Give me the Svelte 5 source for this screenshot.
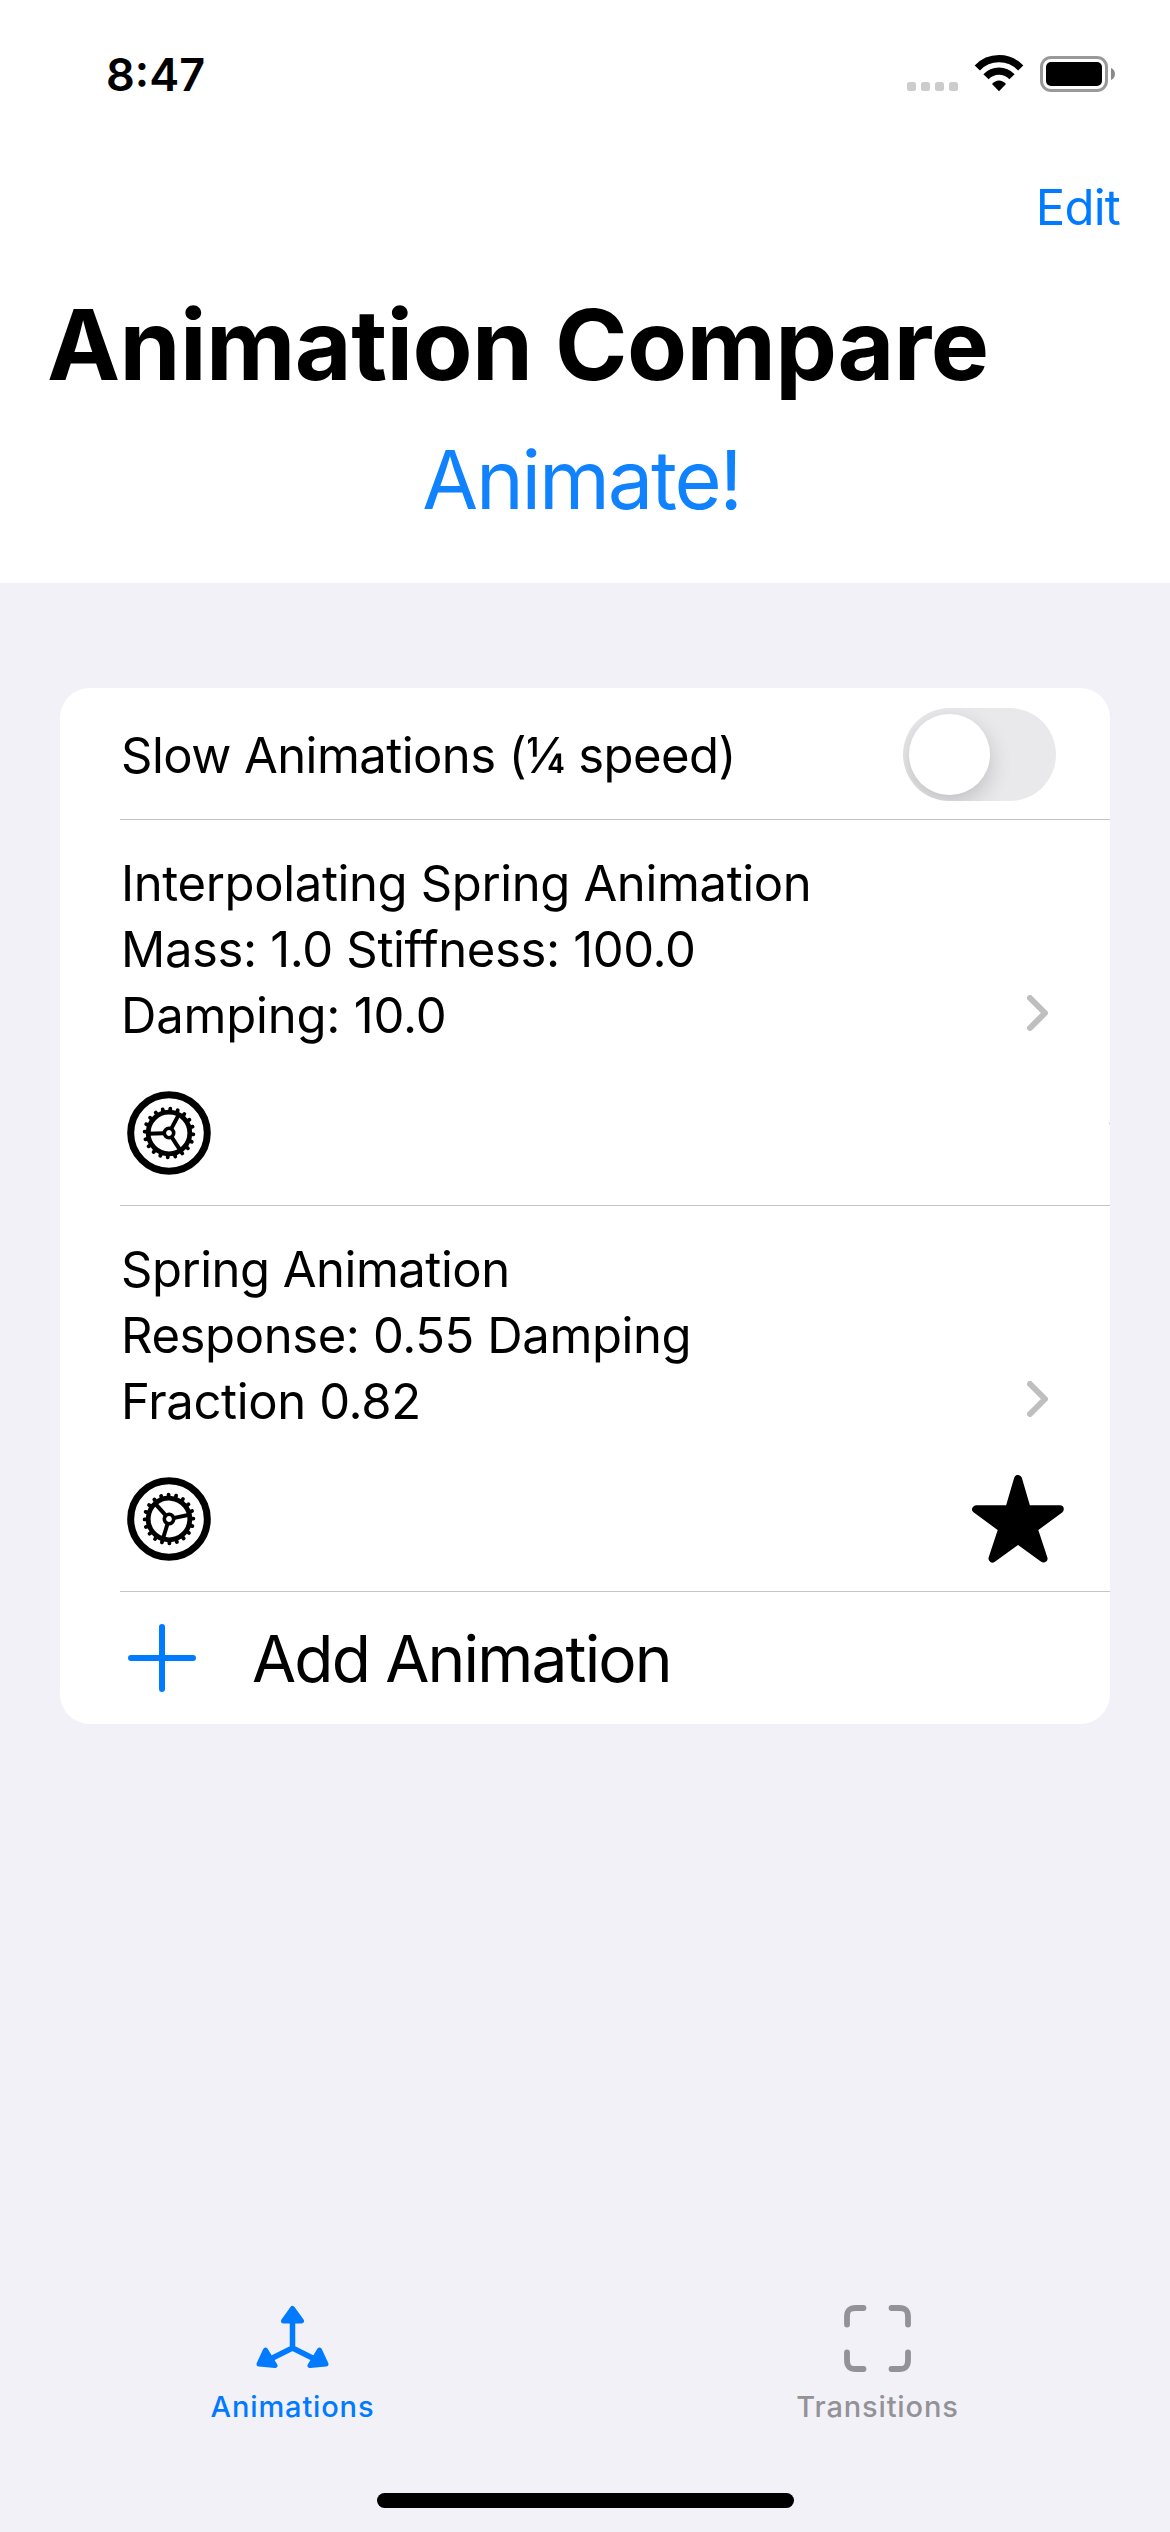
<script>
  const animations = [
    {
      lines: [
        { text: 'Interpolating Spring Animation', tracking: -0.37 },
        { text: 'Mass: 1.0 Stiffness: 100.0', tracking: -0.36 },
        { text: 'Damping: 10.0', tracking: -0.2 },
      ],
      turn: 0,
      away: true,
    },
    {
      lines: [
        { text: 'Spring Animation', tracking: -0.5 },
        { text: 'Response: 0.55 Damping', tracking: -0.4 },
        { text: 'Fraction 0.82', tracking: -0.35 },
      ],
      turn: 50,
      away: false,
    },
  ];
  const teeth = Array.from({ length: 20 }, (_, i) => i * 18 + 3);
  const spokes = [-62, 57, 178];
</script>

<div class="screen">
  <header>
    <div class="status">
      <span class="time">8:47</span>
      <svg class="indicators" width="212" height="40" viewBox="0 0 212 40">
        <g fill="#cccccc">
          <rect x="0" y="26" width="9" height="9" rx="2.5" />
          <rect x="14" y="26" width="9" height="9" rx="2.5" />
          <rect x="28" y="26" width="9" height="9" rx="2.5" />
          <rect x="42" y="26" width="9" height="9" rx="2.5" />
        </g>
        <g fill="none" stroke="#000" stroke-width="7.2">
          <path d="M70.300 12A30 30 0 0 1 113.700 12" />
          <path d="M79 20.700A17.800 17.800 0 0 1 105 20.700" />
        </g>
        <path d="M92 35.200L85 28C89 23.200 95 23.200 99 28Z" />
        <rect x="134.500" y="1.500" width="65" height="33" rx="9.500" fill="none" stroke="#999" stroke-width="3" />
        <rect x="139" y="6" width="56" height="24" rx="5" />
        <path d="M204 12C209.300 14 209.300 22 204 24Z" fill="#888" />
      </svg>
    </div>
    <div class="nav"><span class="edit">Edit</span></div>
    <h1>Animation Compare</h1>
    <div class="action">Animate!</div>
  </header>

  <main>
    <section class="card">
      <div class="row slow">
        <span class="label">Slow Animations (¼ speed)</span>
        <span class="toggle"><i></i></span>
      </div>
      {#each animations as item}
        <div class="row item">
          <div class="info">
            <div class="lines">
              {#each item.lines as line}<span style:letter-spacing="{line.tracking}px">{line.text}</span>{/each}
            </div>
            <svg class="chevron" width="22" height="36" viewBox="0 0 22 36"><path d="M3 3L18 18L3 33" /></svg>
          </div>
          <div class="stage">
            <svg width="84" height="84" viewBox="-42 -42 84 84" fill="none" stroke="#000">
              <circle r="38.300" stroke-width="7" />
              <g transform="rotate({item.turn})">
                <circle r="20.800" stroke-width="4.800" />
                <circle r="4.700" stroke-width="3.600" />
                {#each teeth as a}<path d="M22 0H24.400" stroke-width="3.800" stroke-linecap="round" transform="rotate({a})" />{/each}
                {#each spokes as a}<path d="M5.500 0H22" stroke-width="4" transform="rotate({a})" />{/each}
              </g>
            </svg>
            <svg class="star" class:away={item.away} width="92" height="88" viewBox="0 0 92 88"><path d="M46 4L54.900 34.300L87.800 34.300L61.600 53.500L71.500 83.500L46 65L20.500 83.500L30.400 53.500L4.200 34.300L37.100 34.300Z" /></svg>
          </div>
        </div>
      {/each}
      <div class="row add">
        <svg width="68" height="68" viewBox="0 0 68 68"><path d="M34 3V65M3 34H65" /></svg>
        <span class="addlabel">Add Animation</span>
      </div>
    </section>
  </main>

  <footer>
    <div class="tab active">
      <svg width="76" height="68" viewBox="0 0 76 68">
        <path d="M37.500 44V14M37.500 44L13.500 56M37.500 44L61.500 56" fill="none" stroke="#007aff" stroke-width="5.500" />
        <g fill="#007aff" stroke="#007aff" stroke-width="5" stroke-linejoin="round">
          <path d="M37.500 4.500L46.500 17H28.500Z" />
          <path d="M4 60L10.500 46L20 61.500Z" />
          <path d="M71 60L64.500 46L55 61.500Z" />
        </g>
      </svg>
      <span>Animations</span>
    </div>
    <div class="tab">
      <svg width="76" height="68" viewBox="0 0 76 68">
        <path d="M23.500 4H16C9 4 7 6.500 7 13V20.500M51.500 4H59C66 4 68 6.500 68 13V20.500M23.500 65H16C9 65 7 62.500 7 56V48.500M51.500 65H59C66 65 68 62.500 68 56V48.500" fill="none" stroke="#929297" stroke-width="5.800" stroke-linecap="round" />
      </svg>
      <span>Transitions</span>
    </div>
  </footer>
  <div class="home"><i></i></div>
</div>

<style>
  :global(body) { margin: 0; }
  .screen { width: 1170px; height: 2532px; background: #f2f1f7; display: flex; flex-direction: column; font-family: Inter, sans-serif; color: #000; overflow: hidden; }
  header { height: 583px; background: #fff; display: flex; flex-direction: column; }
  .status { height: 141px; display: flex; justify-content: space-between; align-items: flex-start; padding: 47px 51px 0 106px; box-sizing: border-box; }
  .time { font-size: 45px; font-weight: 600; line-height: 56px; }
  .indicators { margin-top: 9px; overflow: visible; }
  .nav { height: 132px; display: flex; justify-content: flex-end; align-items: center; padding-right: 50px; }
  .edit { color: #007aff; font-size: 49px; letter-spacing: -0.8px; padding-top: 1px; }
  h1 { margin: 0; padding-left: 47px; height: 144px; line-height: 144px; font-size: 98px; font-weight: 700; letter-spacing: -0.58px; white-space: nowrap; }
  .action { text-align: center; color: #1182fe; font-size: 81px; line-height: 126px; letter-spacing: -2.2px; padding-right: 7px; }
  main { flex: 1; padding: 105px 60px 0; }
  .card { height: 1036px; background: #fff; border-radius: 30px; overflow: hidden; }
  .row { margin-left: 60px; box-sizing: border-box; border-bottom: 1px solid #c6c6c8; display: flex; }
  .slow { height: 132px; align-items: center; justify-content: space-between; padding: 2px 54px 0 0; }
  .label, .lines { font-size: 49px; white-space: nowrap; }
  .label { letter-spacing: -0.55px; padding: 2px 0 0 1px; }
  .toggle { width: 153px; height: 93px; border-radius: 47px; background: #e9e9eb; overflow: hidden; padding: 6px; box-sizing: border-box; }
  .toggle i { display: block; width: 81px; height: 81px; border-radius: 50%; background: #fff; box-shadow: 0 8px 22px rgba(0,0,0,.18); }
  .item { height: 386px; flex-direction: column; padding-top: 31px; }
  .info { height: 198px; display: flex; justify-content: space-between; align-items: flex-end; }
  .lines { display: flex; flex-direction: column; line-height: 66px; padding-left: 1px; }
  .chevron { margin: 0 61px 18px 0; fill: none; stroke: #bfbfbf; stroke-width: 6; stroke-linecap: round; stroke-linejoin: round; }
  .stage { display: flex; justify-content: space-between; padding: 42px 46px 0 7px; }
  .star { fill: #000; stroke: #000; stroke-width: 8; stroke-linejoin: round; margin-top: -2px; }
  /* the star has travelled out of the card, with only its tip left inside */
  .away { transform: translateX(137.6px); }
  .add { border: 0; height: 132px; align-items: center; padding-left: 8px; gap: 56px; }
  .add path { stroke: #007aff; stroke-width: 6; stroke-linecap: round; }
  .addlabel { font-size: 64px; letter-spacing: -1.83px; white-space: nowrap; }
  footer { height: 190px; box-sizing: border-box; padding-top: 1px; display: flex; }
  .tab { flex: 1; display: flex; flex-direction: column; align-items: center; gap: 15px; color: #929297; font-size: 29px; font-weight: 500; line-height: 40px; letter-spacing: 0.85px; }
  .tab svg { overflow: visible; }
  .active { color: #007aff; }
  .home { height: 39px; display: flex; justify-content: center; }
  .home i { width: 417px; height: 15px; border-radius: 8px; background: #000; }
</style>
